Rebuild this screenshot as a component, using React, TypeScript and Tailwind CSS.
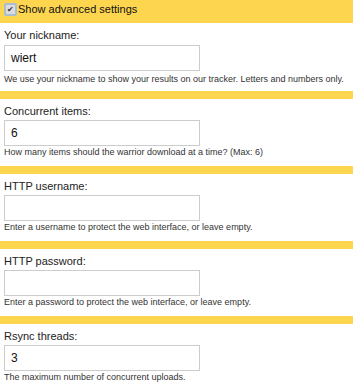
import React from 'react';

const fields = [
  { label: 'Your nickname:', value: 'wiert', help: 'We use your nickname to show your results on our tracker. Letters and numbers only.' },
  { label: 'Concurrent items:', value: '6', help: 'How many items should the warrior download at a time? (Max: 6)' },
  { label: 'HTTP username:', value: '', help: 'Enter a username to protect the web interface, or leave empty.' },
  { label: 'HTTP password:', value: '', help: 'Enter a password to protect the web interface, or leave empty.' },
  { label: 'Rsync threads:', value: '3', help: 'The maximum number of concurrent uploads.' },
];

export default function App() {
  return (
    <div className="w-[353px] h-[390px] overflow-hidden bg-white text-[#222]" style={{ fontFamily: '"Liberation Sans", Arial, sans-serif' }}>
      <div className="h-[23px] bg-[#fed54f] flex items-start pt-[3px] pl-[4px]">
        <span className="w-[13px] h-[13px] border-2 border-[#a9bed2] rounded-[2px] bg-[#dcdcdc] flex items-center justify-center text-[8px] leading-none text-[#333]">
          ✔
        </span>
        <span className="ml-[1px] text-[11px] leading-[13px] text-[#111]">Show advanced settings</span>
      </div>

      {fields.map((f, i) => (
        <div key={i}>
          {i > 0 && <div className="h-[8px] bg-[#fed54f]"></div>}
          <div className={`px-[4px] ${i === 0 ? 'pt-[5px] pb-[6px]' : 'pt-[5px] pb-[8px]'}`}>
            <div className="text-[11px] leading-[14px]">{f.label}</div>
            <div className={`w-[196px] h-[26px] border border-[#ccc] flex items-center px-[6px] text-[12px] text-[#111] ${i === 0 ? 'mt-[3px]' : 'mt-[2px]'}`}>
              {f.value}
            </div>
            <div className={`text-[9px] leading-[12px] text-[#333] whitespace-nowrap ${i === 0 ? 'mt-[2px]' : ''}`}>{f.help}</div>
          </div>
        </div>
      ))}
      <div className="h-[8px] bg-[#fed54f]"></div>
    </div>
  );
}
